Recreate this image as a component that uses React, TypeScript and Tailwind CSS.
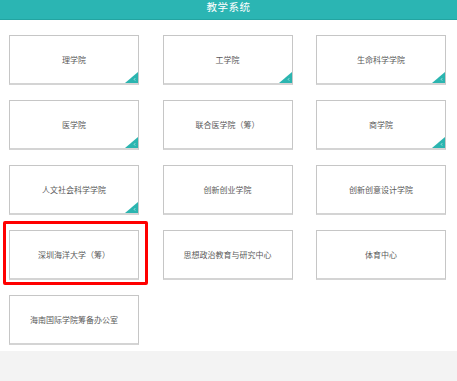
import React from "react";

const items = [
  { name: "理学院", corner: true },
  { name: "工学院", corner: true },
  { name: "生命科学学院", corner: true },
  { name: "医学院", corner: true },
  { name: "联合医学院（筹）", corner: false },
  { name: "商学院", corner: true },
  { name: "人文社会科学学院", corner: true },
  { name: "创新创业学院", corner: false },
  { name: "创新创意设计学院", corner: false },
  { name: "深圳海洋大学（筹）", corner: false, marked: true },
  { name: "思想政治教育与研究中心", corner: false },
  { name: "体育中心", corner: false },
  { name: "海南国际学院筹备办公室", corner: false },
];

function Corner() {
  return (
    <svg className="absolute right-0 bottom-0" width="13" height="11" viewBox="0 0 13 11">
      <polygon points="13,0 13,11 0,11" fill="#2bb5b0" />
      <path d="M10.2 6.2 L9.2 7.4 L10.2 8.6" stroke="#ffffff" strokeWidth="0.7" fill="none" opacity="0.8" />
    </svg>
  );
}

export default function App() {
  return (
    <div className="w-[457px] h-[381px] overflow-hidden bg-[#f3f3f3]" style={{ fontFamily: '"Noto Sans CJK SC", "Noto Sans", sans-serif' }}>
      <div className="h-[20px] bg-[#2bb5b3] border-b border-[#23a4a1] flex items-end justify-center">
        <span className="text-white text-[10.5px] leading-none pb-[7px] tracking-[0.5px]">教学系统</span>
      </div>
      <div className="bg-white pt-[15px] pb-[6px] pl-[9px]">
        <div className="grid grid-cols-[130px_130px_130px] gap-x-[23.5px] gap-y-[15px]">
          {items.map((it) => (
            <div
              key={it.name}
              className="relative h-[50px] border border-[#c6c6c6] border-b-2 border-b-[#d4d4d4] flex items-center justify-center bg-white"
            >
              <span className="text-[8px] leading-none text-[#5a5a5a]">{it.name}</span>
              {it.corner && <Corner />}
              {it.marked && (
                <div className="absolute left-[-7px] top-[-10px] right-[-10px] bottom-[-7px] border-[3px] border-[#ff0000] rounded-[2px]" />
              )}
            </div>
          ))}
        </div>
      </div>
    </div>
  );
}
